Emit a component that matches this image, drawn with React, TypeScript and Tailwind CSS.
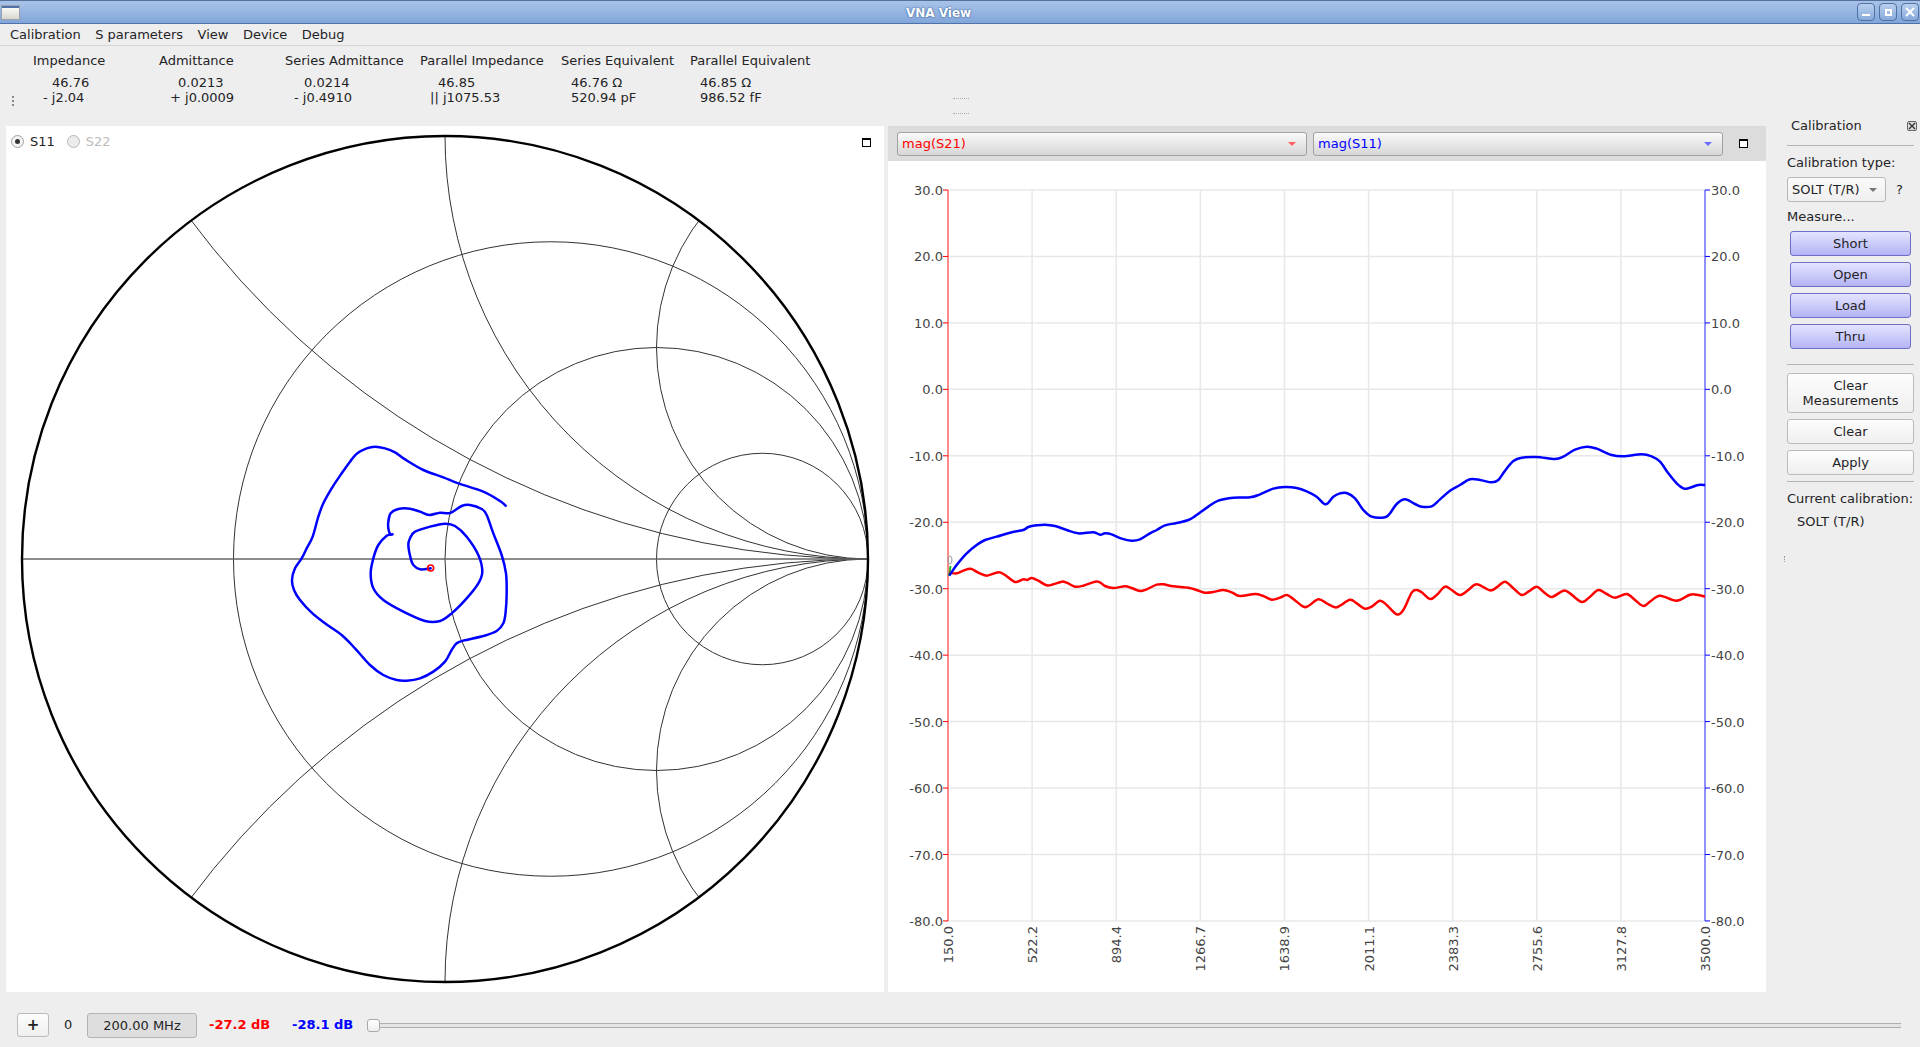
import { ReactNode } from 'react';

type Pt = [number, number];

// traces were read off the reference at 3x, so they are kept in crop coordinates
const fromCrop = (pts: Pt[], ox: number, oy: number): Pt[] => pts.map(([x, y]) => [x / 3 + ox, y / 3 + oy]);

// catmull-rom through the points
function smooth(pts: Pt[]) {
  let d = `M${pts[0][0]} ${pts[0][1]}`;
  for (let i = 0; i < pts.length - 1; i++) {
    const p0 = pts[Math.max(i - 1, 0)];
    const p1 = pts[i];
    const p2 = pts[i + 1];
    const p3 = pts[Math.min(i + 2, pts.length - 1)];
    const c1x = p1[0] + (p2[0] - p0[0]) / 6;
    const c1y = p1[1] + (p2[1] - p0[1]) / 6;
    const c2x = p2[0] - (p3[0] - p1[0]) / 6;
    const c2y = p2[1] - (p3[1] - p1[1]) / 6;
    d += ` C${c1x} ${c1y} ${c2x} ${c2y} ${p2[0]} ${p2[1]}`;
  }
  return d;
}

const s11Outer: Pt[] = [
  [707, 227], [690, 213], [640, 185], [565, 160], [520, 142], [460, 120], [405, 88], [375, 67], [345, 55], [315, 50], [290, 55], [262, 70],
  [240, 95], [215, 130], [185, 175], [160, 220], [145, 260], [128, 320], [110, 355], [95, 385], [75, 415], [66, 450], [72, 480], [90, 510],
  [125, 548], [165, 580], [215, 615], [255, 655], [300, 705], [340, 735], [380, 750], [410, 752], [450, 745], [490, 725], [525, 695], [545, 660],
  [560, 640], [580, 632], [640, 618], [680, 603], [700, 580], [707, 545], [710, 490], [708, 430], [695, 375], [670, 310], [650, 255], [635, 237],
  [600, 225], [575, 228], [540, 249], [510, 248], [478, 255], [450, 245], [420, 236], [385, 237], [362, 250], [355, 275], [355, 295], [360, 312], [367, 313],
];
const s11Inner: Pt[] = [
  [367, 313], [350, 317], [325, 345], [310, 385], [302, 430], [310, 475], [340, 510], [400, 545], [465, 573], [510, 573], [545, 550], [590, 505],
  [625, 460], [637, 425], [625, 375], [590, 320], [555, 288], [525, 281], [480, 290], [435, 305], [420, 325], [415, 345], [422, 385], [430, 405],
  [450, 418], [482, 415],
];

const blueTrace: Pt[] = [
  ...fromCrop([
    [58, 437], [80, 405], [110, 370], [140, 345], [165, 330], [200, 320], [240, 308], [280, 300], [295, 291], [320, 286], [345, 284], [375, 288],
    [410, 300], [445, 310], [490, 307], [510, 314], [525, 310], [545, 313], [575, 326], [605, 332], [630, 328], [660, 310], [680, 300], [705, 286],
    [740, 279], [775, 270], [800, 255], [835, 230], [865, 212], [910, 203], [960, 202], [990, 193], [1030, 176], [1065, 171], [1100, 174], [1130, 184],
    [1160, 200], [1187, 223], [1210, 200],
  ], 930, 430),
  ...fromCrop([
    [0, 190], [20, 189], [45, 205], [70, 240], [95, 260], [135, 262], [150, 250], [170, 222], [195, 208], [225, 222], [245, 230], [275, 229],
    [300, 208], [330, 182], [360, 165], [390, 148], [420, 150], [455, 157], [475, 150], [495, 122], [520, 93], [545, 83], [590, 81], [645, 87],
    [670, 80], [705, 59], [740, 50], [770, 56], [815, 75], [850, 79], [905, 73], [935, 79], [960, 95], [985, 130], [1010, 160], [1030, 175],
    [1045, 175], [1075, 165], [1095, 165],
  ], 1340, 430),
];

const redTrace: Pt[] = [
  ...fromCrop([
    [58, 428], [80, 430], [100, 422], [122, 416], [145, 428], [170, 437], [205, 427], [225, 435], [255, 456], [280, 448], [292, 450], [305, 444],
    [325, 452], [350, 466], [370, 463], [395, 455], [410, 458], [435, 470], [460, 467], [495, 455], [510, 457], [525, 468], [550, 474], [585, 469],
    [605, 474], [630, 483], [650, 478], [680, 464], [700, 463], [730, 469], [775, 473], [800, 480], [825, 488], [850, 486], [880, 480], [905, 487],
    [930, 498], [975, 492], [1000, 498], [1025, 509], [1050, 503], [1070, 495], [1090, 507], [1120, 530], [1135, 528], [1165, 508], [1190, 520], [1215, 532],
  ], 930, 430),
  ...fromCrop([
    [0, 527], [30, 509], [50, 520], [75, 536], [95, 530], [120, 512], [140, 525], [170, 553], [190, 540], [215, 488], [230, 480], [245, 487],
    [270, 507], [290, 495], [315, 470], [335, 480], [360, 495], [385, 480], [410, 463], [450, 481], [470, 472], [495, 455], [520, 475], [545, 495],
    [565, 485], [590, 470], [610, 485], [635, 501], [670, 482], [690, 490], [725, 516], [750, 500], [775, 480], [800, 492], [825, 503], [860, 492],
    [885, 510], [910, 528], [930, 515], [960, 497], [1010, 512], [1050, 494], [1075, 495], [1095, 500],
  ], 1340, 430),
];

const CX = 445;
const CY = 559;
const R = 423;

function SmithChart() {
  return (
    <svg viewBox="6 126 878 866" className="block h-full w-full">
      <defs>
        <clipPath id="unit">
          <circle cx={CX} cy={CY} r={R} />
        </clipPath>
      </defs>
      <g fill="none" stroke="#333" strokeWidth="1" clipPath="url(#unit)">
        {[0.25, 0.5, 0.75].map((f) => (
          <circle key={f} cx={CX + f * R} cy={CY} r={(1 - f) * R} />
        ))}
        {[0.5, 1, 2].flatMap((x) => [
          <circle key={`u${x}`} cx={CX + R} cy={CY - R / x} r={R / x} />,
          <circle key={`d${x}`} cx={CX + R} cy={CY + R / x} r={R / x} />,
        ])}
        <line x1={CX - R} y1={CY} x2={CX + R} y2={CY} stroke="#666" strokeWidth="1.4" />
      </g>
      <circle cx={CX} cy={CY} r={R} fill="none" stroke="#000" strokeWidth="2.4" />
      <g transform="translate(270 430) scale(0.33333)" fill="none" stroke="#0000ff" strokeWidth="7.5" strokeLinecap="round" strokeLinejoin="round">
        <path d={smooth(s11Outer)} />
        <path d={smooth(s11Inner)} />
        <circle cx="482" cy="414" r="9" stroke="#ff0000" strokeWidth="5" />
      </g>
    </svg>
  );
}

const yTicks = [30, 20, 10, 0, -10, -20, -30, -40, -50, -60, -70, -80];
const xTicks = ['150.0', '522.2', '894.4', '1266.7', '1638.9', '2011.1', '2383.3', '2755.6', '3127.8', '3500.0'];
const PLOT_L = 948;
const PLOT_R = 1705;
const PLOT_T = 190;
const DB_STEP = 66.45;
const F_STEP = (PLOT_R - PLOT_L) / 9;
const PLOT_B = PLOT_T + 11 * DB_STEP;

function TraceChart() {
  return (
    <svg viewBox="888 161 878 831" className="block h-full w-full">
      <g stroke="#e8e8e8" strokeWidth="1.5">
        {yTicks.map((t, i) => (
          <line key={t} x1={PLOT_L} x2={PLOT_R} y1={PLOT_T + i * DB_STEP} y2={PLOT_T + i * DB_STEP} />
        ))}
        {xTicks.map((t, i) => (
          <line key={t} x1={PLOT_L + i * F_STEP} x2={PLOT_L + i * F_STEP} y1={PLOT_T} y2={PLOT_B} />
        ))}
      </g>
      <line x1={PLOT_L} x2={PLOT_L} y1={PLOT_T} y2={PLOT_B} stroke="#ff6a6a" strokeWidth="1.5" />
      <line x1={PLOT_R} x2={PLOT_R} y1={PLOT_T} y2={PLOT_B} stroke="#7272ff" strokeWidth="1.5" />
      {yTicks.map((t, i) => {
        const y = PLOT_T + i * DB_STEP;
        return (
          <g key={t}>
            <line x1={PLOT_L - 5} x2={PLOT_L} y1={y} y2={y} stroke="#ff0000" />
            <line x1={PLOT_R} x2={PLOT_R + 5} y1={y} y2={y} stroke="#0000ff" />
            <text x={PLOT_L - 5} y={y + 5} textAnchor="end" className="fill-[#444] text-[13px]">
              {t.toFixed(1)}
            </text>
            <text x={PLOT_R + 6} y={y + 5} className="fill-[#444] text-[13px]">
              {t.toFixed(1)}
            </text>
          </g>
        );
      })}
      {xTicks.map((t, i) => {
        const x = PLOT_L + i * F_STEP;
        return (
          <text key={t} transform={`translate(${x + 5} 926) rotate(-90)`} textAnchor="end" className="fill-[#444] text-[13px]">
            {t}
          </text>
        );
      })}
      <ellipse cx="950" cy="560" rx="2" ry="4" fill="none" stroke="#999" />
      <line x1="950.5" y1="566" x2="949" y2="576" stroke="#22bb22" strokeWidth="2" />
      <g fill="none" strokeWidth="2.5" strokeLinejoin="round">
        <path d={smooth(redTrace)} stroke="#ff0000" />
        <path d={smooth(blueTrace)} stroke="#0000ff" />
      </g>
    </svg>
  );
}

function DockIcon() {
  return <div className="h-[9px] w-[9px] border border-t-2 border-black bg-white" />;
}

const infoColumns = [
  { title: 'Impedance', width: 'w-[126px]', a: '46.76', aPad: 'pl-[19px]', b: '- j2.04', bPad: 'pl-[10px]' },
  { title: 'Admittance', width: 'w-[126px]', a: '0.0213', aPad: 'pl-[19px]', b: '+ j0.0009', bPad: 'pl-[11px]' },
  { title: 'Series Admittance', width: 'w-[135px]', a: '0.0214', aPad: 'pl-[19px]', b: '- j0.4910', bPad: 'pl-[9px]' },
  { title: 'Parallel Impedance', width: 'w-[141px]', a: '46.85', aPad: 'pl-[18px]', b: '|| j1075.53', bPad: 'pl-[10px]' },
  { title: 'Series Equivalent', width: 'w-[129px]', a: '46.76 Ω', aPad: 'pl-[10px]', b: '520.94 pF', bPad: 'pl-[10px]' },
  { title: 'Parallel Equivalent', width: 'w-[140px]', a: '46.85 Ω', aPad: 'pl-[10px]', b: '986.52 fF', bPad: 'pl-[10px]' },
];

function Combo({ label, text, arrow }: { label: string; text: string; arrow: string }) {
  return (
    <div className="flex h-[24px] flex-1 items-center justify-between rounded-[3px] border border-[#a2a2a2] bg-gradient-to-b from-[#fafafa] to-[#d6d6d6] pl-[4px] pr-[10px]">
      <span className={text}>{label}</span>
      <span className={`h-0 w-0 border-x-[4px] border-t-[4px] border-x-transparent ${arrow}`} />
    </div>
  );
}

function MeasureButton({ children }: { children: ReactNode }) {
  return (
    <div className="mx-[3px] flex h-[25px] items-center justify-center rounded-[3px] border border-[#6f6fc8] bg-gradient-to-b from-[#e4e4ff] to-[#b4b4f4]">
      {children}
    </div>
  );
}

function PlainButton({ children, tall }: { children: ReactNode; tall?: boolean }) {
  return (
    <div className={`flex items-center justify-center rounded-[3px] border border-[#bbbbbb] bg-gradient-to-b from-[#fdfdfd] to-[#efefef] text-center leading-[15px] ${tall ? 'h-[40px]' : 'h-[25px]'}`}>
      <div>{children}</div>
    </div>
  );
}

function Sep() {
  return <div className="h-px bg-[#b4b4b4]" />;
}

function WinButton({ children }: { children: ReactNode }) {
  return (
    <div className="flex h-[18px] w-[18px] items-center justify-center rounded-[4px] border border-[#4f72a6] bg-gradient-to-b from-[#b9d0ee] to-[#87aadb]">
      {children}
    </div>
  );
}

export default function App() {
  return (
    <div className="flex h-[1047px] w-[1920px] flex-col overflow-hidden bg-[#eeeeee] font-['DejaVu_Sans',sans-serif] text-[13px] text-[#1f2326]">
      {/* Title bar */}
      <div className="flex h-[24px] items-center border-y border-t-[#56709c] border-b-[#4f72a8] bg-gradient-to-b from-[#a8c3e8] to-[#82a6da]">
        <div className="ml-px flex h-[15px] w-[19px] flex-col border border-[#9aa3ad] bg-gradient-to-b from-white to-[#d8d8d0]">
          <div className="h-[2px] bg-[#4f72a8]" />
        </div>
        <div className="flex-1 pt-[1px] text-center text-[12px] font-bold text-white [text-shadow:0_0_2px_#1d3f80]">VNA View</div>
        <div className="mr-[1px] flex gap-[4px]">
          <WinButton>
            <div className="mt-[6px] h-[2px] w-[8px] bg-white" />
          </WinButton>
          <WinButton>
            <div className="h-[7px] w-[7px] border-2 border-white" />
          </WinButton>
          <WinButton>
            <svg viewBox="0 0 10 10" className="h-[10px] w-[10px]">
              <path d="M1 1 L9 9 M9 1 L1 9" stroke="#fff" strokeWidth="2" />
            </svg>
          </WinButton>
        </div>
      </div>

      {/* Menu */}
      <div className="flex h-[22px] items-center gap-[14.5px] border-b border-[#d6d6d6] pl-[10px]">
        <span>Calibration</span>
        <span>S parameters</span>
        <span>View</span>
        <span>Device</span>
        <span>Debug</span>
      </div>

      {/* Info strip */}
      <div className="relative h-[80px] pl-[33px] pt-[6px]">
        <div className="flex">
          {infoColumns.map((c) => (
            <div key={c.title} className={c.width}>
              <div className="h-[18px] leading-[18px]">{c.title}</div>
              <div className={`mt-[5px] h-[15px] leading-[15px] ${c.aPad}`}>{c.a}</div>
              <div className={`h-[15px] leading-[15px] ${c.bPad}`}>{c.b}</div>
            </div>
          ))}
        </div>
        <div className="absolute left-[12px] top-[50px] h-[10px] border-l-2 border-dotted border-[#888]" />
        <div className="absolute left-[953px] top-[52px] w-[16px] border-t border-dotted border-[#aaa]" />
        <div className="absolute left-[953px] top-[67px] w-[16px] border-t border-dotted border-[#aaa]" />
      </div>

      {/* Main area */}
      <div className="flex h-[866px] pl-[6px]">
        <div className="relative w-[878px] bg-white">
          <SmithChart />
          <div className="absolute left-[5px] top-[6px] flex items-center">
            <div className="flex h-[13px] w-[13px] items-center justify-center rounded-full border border-[#a0a0a0] bg-[#f4f4f4]">
              <div className="h-[5px] w-[5px] rounded-full bg-[#333]" />
            </div>
            <span className="ml-[6px]">S11</span>
            <div className="ml-[12px] h-[13px] w-[13px] rounded-full border border-[#b8b8b8] bg-[#ececec]" />
            <span className="ml-[6px] text-[#bcbcbc]">S22</span>
          </div>
          <div className="absolute right-[13px] top-[12px]">
            <DockIcon />
          </div>
        </div>

        <div className="ml-[4px] flex w-[878px] flex-col bg-white">
          <div className="flex h-[35px] items-center gap-[6px] bg-[#dcdcdc] pl-[9px]">
            <Combo label="mag(S21)" text="text-[#ff0000]" arrow="border-t-[#ff6060]" />
            <Combo label="mag(S11)" text="text-[#0000ff]" arrow="border-t-[#6a6aff]" />
            <div className="-ml-[6px] flex w-[43px] items-center justify-center pr-[2px]">
              <DockIcon />
            </div>
          </div>
          <div className="flex-1">
            <TraceChart />
          </div>
        </div>

        {/* Calibration dock */}
        <div className="relative flex-1 pl-[21px] pr-[6px]">
          <div className="-mt-[9px] flex h-[28px] items-start justify-between pl-[4px]">
            <span className="leading-[18px]">Calibration</span>
            <div className="-mr-[3px] mt-[4px] flex h-[10px] w-[10px] items-center justify-center rounded-[2px] border border-[#666] bg-[#ddd]">
              <svg viewBox="0 0 8 8" className="h-[8px] w-[8px]">
                <path d="M1 1 L7 7 M7 1 L1 7" stroke="#333" strokeWidth="1.4" />
              </svg>
            </div>
          </div>
          <Sep />
          <div className="mt-[8px] h-[18px] leading-[18px]">Calibration type:</div>
          <div className="mt-[5px] flex items-center">
            <div className="flex h-[25px] w-[99px] items-center justify-between rounded-[3px] border border-[#b8b8b8] bg-gradient-to-b from-[#fafafa] to-[#efefef] pl-[4px] pr-[8px]">
              <span>SOLT (T/R)</span>
              <span className="h-0 w-0 border-x-[4px] border-t-[4px] border-x-transparent border-t-[#777]" />
            </div>
            <span className="ml-[10px]">?</span>
          </div>
          <div className="mt-[6px] h-[18px] leading-[18px]">Measure...</div>
          <div className="mt-[5px] flex flex-col gap-[6px]">
            <MeasureButton>Short</MeasureButton>
            <MeasureButton>Open</MeasureButton>
            <MeasureButton>Load</MeasureButton>
            <MeasureButton>Thru</MeasureButton>
          </div>
          <div className="mt-[15px]">
            <Sep />
          </div>
          <div className="mt-[8px] flex flex-col gap-[6px]">
            <PlainButton tall>
              Clear
              <br />
              Measurements
            </PlainButton>
            <PlainButton>Clear</PlainButton>
            <PlainButton>Apply</PlainButton>
          </div>
          <div className="mt-[6px]">
            <Sep />
          </div>
          <div className="mt-[8px] h-[18px] leading-[18px]">Current calibration:</div>
          <div className="mt-[5px] h-[18px] pl-[10px] leading-[18px]">SOLT (T/R)</div>
          <div className="absolute left-[18px] top-[430px] h-[6px] border-l border-dotted border-[#999]" />
        </div>
      </div>

      {/* Marker strip */}
      <div className="flex flex-1 items-start pl-[17px] pt-[21px]">
        <div className="flex h-[24px] w-[32px] items-center justify-center rounded-[3px] border border-[#bbbbbb] bg-gradient-to-b from-[#fdfdfd] to-[#efefef] text-[15px] font-bold leading-none">
          +
        </div>
        <span className="ml-[15px] w-[23px] leading-[24px]">0</span>
        <div className="flex h-[25px] w-[110px] items-center justify-center rounded-[3px] border border-[#b4b4b4] bg-[#dedede]">
          200.00 MHz
        </div>
        <span className="ml-[12px] w-[83px] font-bold leading-[24px] text-[#ff0000]">-27.2 dB</span>
        <span className="w-[75px] font-bold leading-[24px] text-[#0000ff]">-28.1 dB</span>
        <div className="relative mt-[10px] h-[5px] w-[1534px] border-y border-[#b0b0b0] bg-[#e4e4e4]">
          <div className="absolute -top-[5px] left-0 h-[13px] w-[13px] rounded-[3px] border border-[#aaaaaa] bg-gradient-to-b from-white to-[#eeeeee]" />
        </div>
      </div>
    </div>
  );
}
